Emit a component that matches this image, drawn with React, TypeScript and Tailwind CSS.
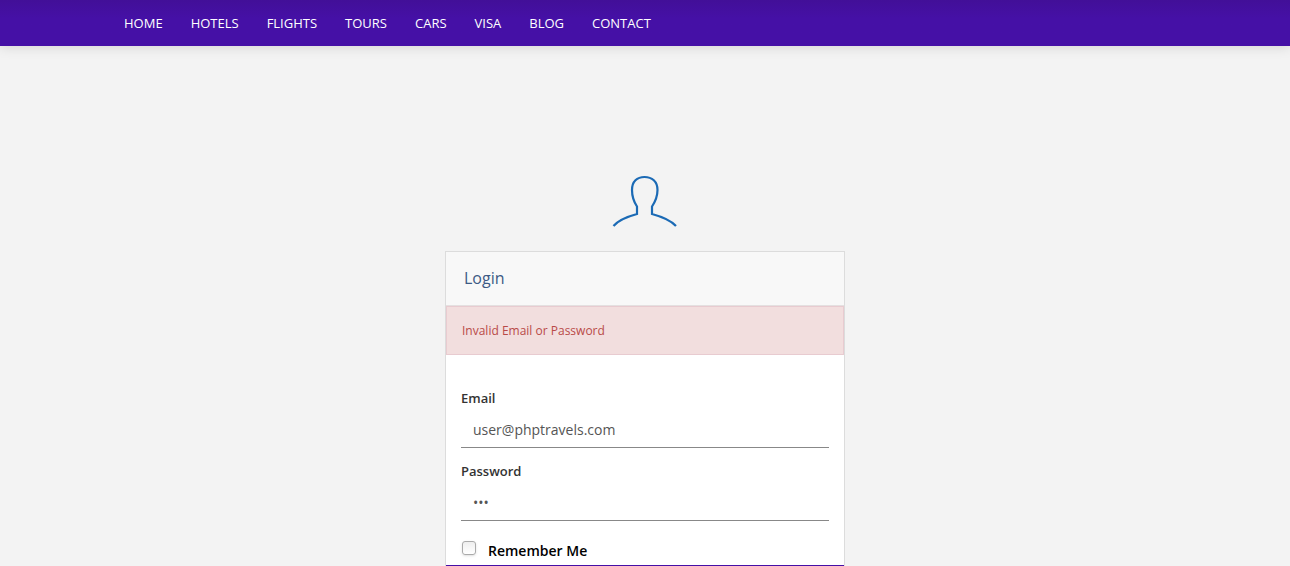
import { useState } from "react";

const links = ["Home", "Hotels", "Flights", "Tours", "Cars", "Visa", "Blog", "Contact"];

function NavBar() {
  return (
    <header className="bg-[#4510a6] bg-linear-to-b from-[#420f98] to-[#4510a6] to-40% shadow-[0_1px_12px_rgba(0,0,0,0.13)]">
      <nav className="mx-auto flex h-[46px] max-w-[1070px] items-center px-3.5">
        <ul className="flex gap-7">
          {links.map((link) => (
            <li key={link}>
              <a href={`#${link.toLowerCase()}`} className="block text-[13px] leading-5 text-white uppercase">
                {link}
              </a>
            </li>
          ))}
        </ul>
      </nav>
    </header>
  );
}

function UserIcon() {
  return (
    <svg
      aria-hidden="true"
      viewBox="0 0 66 52"
      className="mx-auto block h-[52px] w-[66px]"
      fill="none"
      stroke="#1b6ab5"
      strokeWidth="2.2"
    >
      <path d="M1.5 51 C6 45.5 14 42 25 39 V31.5 C22 27 20 21 20 15 C20 6.5 25 2 32.5 2 C40 2 45.5 6.5 45.5 15 C45.5 21 43 27 40 31.5 V39 C51 42 59 45.5 64 51" />
    </svg>
  );
}

type FieldProps = {
  id: string;
  label: string;
  type: string;
  value: string;
  onChange: (value: string) => void;
};

function Field({ id, label, type, value, onChange }: FieldProps) {
  return (
    <div>
      <label htmlFor={id} className="block text-[13px] leading-5 font-semibold text-[#333]">
        {label}
      </label>
      <input
        id={id}
        type={type}
        value={value}
        onChange={(event) => onChange(event.target.value)}
        className="mt-1 block h-9 w-full border-b border-[#888] bg-transparent px-3 text-sm text-[#555] outline-none"
      />
    </div>
  );
}

export default function App() {
  const [email, setEmail] = useState("user@phptravels.com");
  const [password, setPassword] = useState("abc");
  const [remember, setRemember] = useState(false);

  return (
    <div className="h-screen overflow-y-auto bg-[#f3f3f3] font-['Open_Sans',sans-serif] [scrollbar-width:none]">
      <NavBar />
      <main className="mx-auto w-full max-w-[400px] pt-[129px]">
        <UserIcon />
        <form className="mt-6 border border-[#dcdcdc] bg-white" onSubmit={(event) => event.preventDefault()}>
          <h1 className="border-b border-[#e4e0e0] bg-[#f8f8f8] px-[18px] py-3.5 text-base leading-[25px] text-[#3d5a85]">
            Login
          </h1>
          <p role="alert" className="border border-[#e8cbd0] bg-[#f2dede] px-[15px] py-3.5 text-xs leading-[19px] text-[#b94a48]">
            Invalid Email or Password
          </p>
          <div className="flex flex-col gap-[13px] px-[15px] pt-[33px]">
            <Field id="email" label="Email" type="email" value={email} onChange={setEmail} />
            <Field id="password" label="Password" type="password" value={password} onChange={setPassword} />
          </div>
          <div className="flex items-start px-4 pt-5 pb-1">
            <input
              id="remember"
              type="checkbox"
              checked={remember}
              onChange={(event) => setRemember(event.target.checked)}
              className="size-3.5 appearance-none rounded-[3px] border border-[#aaa] bg-linear-to-b from-[#eee] to-white shadow-sm checked:bg-[#4510a6]"
            />
            <label htmlFor="remember" className="ml-3 text-sm leading-5 font-semibold text-black">
              Remember Me
            </label>
          </div>
          <button type="submit" aria-label="Login" className="block h-12 w-full bg-[#4510a6]" />
        </form>
      </main>
    </div>
  );
}
